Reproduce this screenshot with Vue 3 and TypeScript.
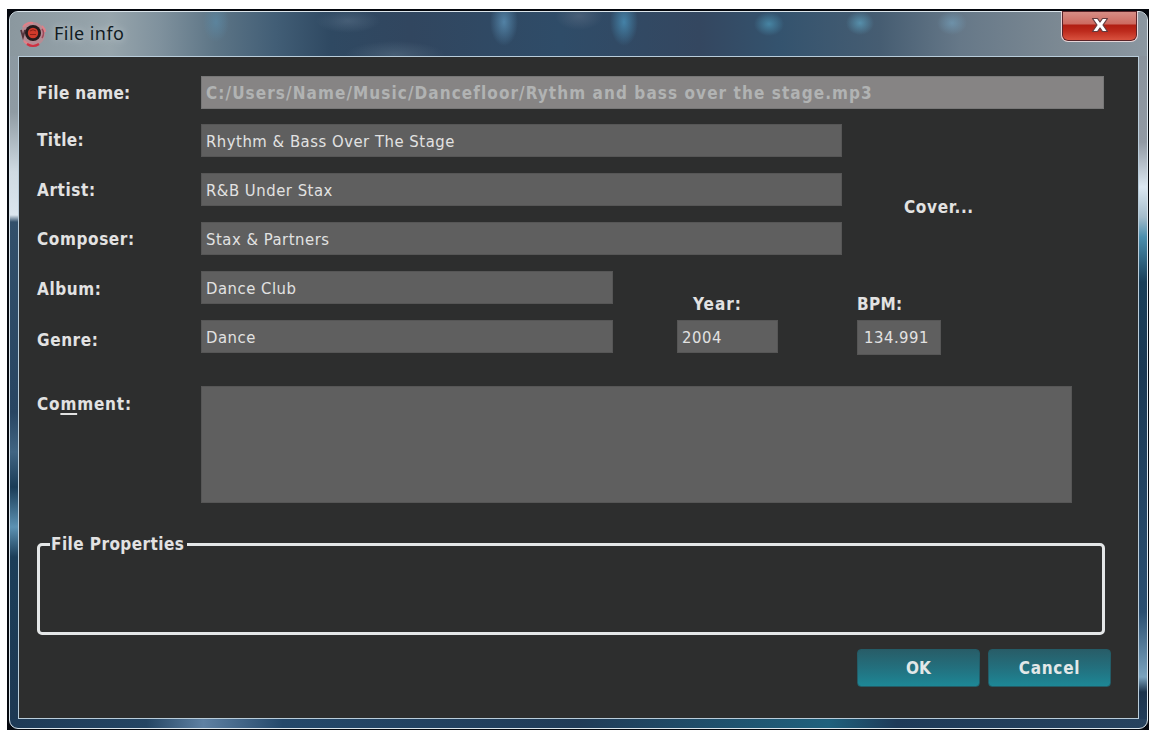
<script setup lang="ts">
interface Row {
  key: string
  label: string
  value: string
}

const mainRows: Row[] = [
  { key: 'title', label: 'Title:', value: 'Rhythm & Bass Over The Stage' },
  { key: 'artist', label: 'Artist:', value: 'R&B Under Stax' },
  { key: 'composer', label: 'Composer:', value: 'Stax & Partners' },
]
const sideRows: Row[] = [
  { key: 'album', label: 'Album:', value: 'Dance Club' },
  { key: 'genre', label: 'Genre:', value: 'Dance' },
]
</script>

<template>
  <div class="page">
    <div class="backdrop">
      <div class="window">
        <header class="titlebar">
          <svg class="app-icon" width="28" height="28" viewBox="0 0 28 28">
            <circle cx="14" cy="14" r="12" fill="#d98088" opacity=".55" />
            <path d="M4 7Q8 2 14 3M5 21q4 4 8 4M23 6q3 3 3 6" fill="none" stroke="#e08088" stroke-width="2" />
            <path d="M8 24q6 4 12 0" fill="none" stroke="#cf3142" stroke-width="2.2" />
            <path d="M2 10l2 7 2-7" fill="none" stroke="#54343c" stroke-width="1.800" />
            <path d="M23 9q3 4 0 9" fill="none" stroke="#a0485a" stroke-width="1.500" />
            <circle cx="14" cy="13" r="8" fill="#251b1d" />
            <circle cx="14" cy="13" r="5.200" fill="#cf3a2b" />
            <path d="M11 11q3-2.500 6 0M11 14.500h6" fill="none" stroke="#8b2018" stroke-width="1" />
          </svg>
          <h1 class="caption">File info</h1>
          <button class="close" aria-label="Close">
            <svg width="18" height="16" viewBox="0 0 18 16">
              <path d="M1.500 1.500H6.500L9 5L11.500 1.500H16.500L12 8L16.500 14.500H11.500L9 11L6.500 14.500H1.500L6 8Z" fill="#fff" stroke="#633b3e" stroke-width="1.200" stroke-linejoin="round" />
            </svg>
          </button>
        </header>

        <main class="body">
          <div class="row filename">
            <label class="label">File name:</label>
            <div class="field path"><span>C:/Users/Name/Music/Dancefloor/Rythm and bass over the stage.mp3</span></div>
          </div>

          <div class="section upper">
            <div class="stack wide">
              <div v-for="r in mainRows" :key="r.key" class="row" :class="r.key">
                <label class="label">{{ r.label }}</label>
                <div class="field"><span>{{ r.value }}</span></div>
              </div>
            </div>
            <span class="cover">Cover...</span>
          </div>

          <div class="section lower">
            <div class="stack narrow">
              <div v-for="r in sideRows" :key="r.key" class="row" :class="r.key">
                <label class="label">{{ r.label }}</label>
                <div class="field"><span>{{ r.value }}</span></div>
              </div>
            </div>
            <div class="mini year">
              <label class="label">Year:</label>
              <div class="field"><span>2004</span></div>
            </div>
            <div class="mini bpm">
              <label class="label">BPM:</label>
              <div class="field"><span>134.991</span></div>
            </div>
          </div>

          <div class="row comment">
            <label class="label">Co<u>m</u>ment:</label>
            <div class="field area"></div>
          </div>

          <fieldset class="props">
            <legend>File Properties</legend>
          </fieldset>

          <footer class="actions">
            <button class="btn ok"><span>OK</span></button>
            <button class="btn cancel"><span>Cancel</span></button>
          </footer>
        </main>
      </div>
    </div>
  </div>
</template>

<style>
html,
body {
  margin: 0;
  background: #fff;
}
</style>

<style scoped>
* {
  box-sizing: border-box;
}
.page {
  width: 1156px;
  height: 735px;
  padding: 9px 7px 5px;
  overflow: hidden;
  background: #fff;
  font-family: 'DejaVu Sans Condensed', 'Noto Sans', sans-serif;
  font-size: 17px;
  color: #e2e2e2;
}
.backdrop {
  width: 1142px;
  height: 721px;
  padding: 2px 1px 1px 2px;
  background: #05080e;
}
.window {
  display: flex;
  flex-direction: column;
  height: 718px;
  padding: 0 8px 9px;
  border: 1.500px solid #dbe5eb;
  border-radius: 9px;
  background:
    linear-gradient(90deg, #1e3a56, #244563 12%, #5f81a3 17%, #24486a 24%, #203b57 50%, #1f617d 72%, #1e3a58 78%, #27435f) bottom / 100% 9px no-repeat,
    linear-gradient(#8a98a1 0, #8f9ba3 100px, #cfdae2 160px, #dbe6ee 203px, #32506b 210px, #284562 400px, #416583 440px, #1a3c57 475px, #5c92b3 515px, #1c3e59 545px, #1d3853 100%) left / 9px 100% no-repeat,
    linear-gradient(#858f99 0, #9199a3 130px, #dce8f2 175px, #a4bccb 205px, #4b8fae 225px, #193f59 270px, #1b3954 360px, #2b4f71 600px, #7ba4bf 665px, #1c334b 680px, #23405f 100%) right / 9px 100% no-repeat,
    #2b4863;
}
.titlebar {
  display: flex;
  flex: none;
  height: 44px;
  margin: 0 -8px;
  padding-left: 9px;
  border-radius: 8px 8px 0 0;
  background:
    radial-gradient(ellipse 13px 20px at 206px 10px, #5b8ba8aa, #5b8ba800),
    radial-gradient(ellipse 32px 12px at 338px 9px, #687e9566, #687e9500),
    radial-gradient(ellipse 14px 24px at 494px 10px, #5b90b5cc, #5b90b500),
    radial-gradient(ellipse 14px 24px at 614px 10px, #4990b8cc, #4990b800),
    radial-gradient(ellipse 15px 12px at 759px 12px, #4b91b1cc, #4b91b100),
    radial-gradient(ellipse 14px 12px at 850px 11px, #5b9cb9cc, #5b9cb900),
    radial-gradient(ellipse 15px 12px at 942px 11px, #739fbaaa, #739fba00),
    radial-gradient(ellipse 24px 14px at 569px 4px, #596b8299, #596b8200),
    radial-gradient(ellipse 50px 14px at 385px 43px, #5b738888, #5b738800),
    linear-gradient(90deg, #8b989f 0, #97a5ac 100px, #7f919d 150px, #5d7586 205px, #425e76 265px, #2f4962 320px, #31465f 400px, #2f4c68 550px, #344760 690px, #34536e 770px, #465d72 870px, #667888 950px, #7c8993 1050px, #8b97a1 100%);
}
.app-icon {
  flex: none;
  margin-top: 8px;
}
.caption {
  margin: 9px 0 0 7px;
  color: #111b22;
  font: 400 18px/24px 'Noto Sans', sans-serif;
  letter-spacing: 0.450px;
  text-shadow: 0 0 7px #cbd5da;
}
.close {
  display: flex;
  align-items: center;
  justify-content: center;
  width: 77px;
  height: 31px;
  margin: -1px 9px 0 auto;
  padding: 0 0 2px;
  border: 1.500px solid #e6d5d8;
  border-top: 0;
  border-radius: 0 0 7px 7px;
  background: linear-gradient(#d79088 0, #cd6a60 13px, #b01e12 14px, #bd2a1c 20px, #dc5643 30px);
  box-shadow: inset 0 0 0 1px #5a2328;
}
.body {
  flex: 1;
  display: flex;
  flex-direction: column;
  min-height: 0;
  border: 1.500px solid #b9cddb;
  padding: 19px 0 0 18px;
  background: #2d2e2e;
}
.row {
  display: flex;
  flex: none;
}
.label {
  width: 164px;
  flex: none;
  font-size: 17px;
  font-weight: 700;
  line-height: 26px;
  letter-spacing: 0.600px;
  white-space: nowrap;
}
.label u {
  text-decoration-thickness: 1.500px;
  text-underline-offset: 3px;
}
.field {
  height: 33px;
  padding-left: 4px;
  border: 1px solid #565656;
  background: #5f5f5f;
  font-size: 16.500px;
  line-height: 34px;
  letter-spacing: 0.520px;
  white-space: nowrap;
}
.path {
  width: 903px;
  border-color: #777;
  background: #868484;
  color: #b1b3b3;
  font-size: 17px;
  font-weight: 700;
  line-height: 33px;
  letter-spacing: 1.070px;
}
.section {
  display: flex;
  flex: none;
}
.stack {
  display: flex;
  flex-direction: column;
  gap: 16px;
}
.upper {
  margin-top: 15px;
}
.wide .field {
  width: 641px;
}
.lower {
  margin-top: 16px;
}
.narrow .field {
  width: 412px;
}
.filename .label {
  padding-top: 4px;
  letter-spacing: 0.330px;
}
.title .label {
  padding-top: 3px;
  letter-spacing: 0.400px;
}
.artist .label {
  padding-top: 4px;
}
.composer .label {
  padding-top: 4px;
}
.album .label {
  padding-top: 5px;
}
.genre .label {
  padding-top: 7px;
}
.cover {
  margin: 70px 0 0 62px;
  font-size: 17px;
  font-weight: 700;
  line-height: 26px;
  letter-spacing: 0.650px;
}
.mini {
  display: flex;
  flex-direction: column;
  padding-top: 20px;
}
.mini .label {
  width: auto;
  margin-bottom: 3px;
}
.year {
  width: 101px;
  margin-left: 64px;
}
.year .label {
  padding-left: 16px;
  letter-spacing: 1px;
}
.bpm {
  width: 84px;
  margin-left: 79px;
}
.bpm .field {
  height: 35px;
  padding-left: 6px;
}
.bpm .label {
  letter-spacing: 0.300px;
}
.comment {
  margin-top: 31px;
}
.comment .label {
  padding-top: 5px;
  letter-spacing: 0.820px;
}
.area {
  width: 871px;
  height: 117px;
}
.props {
  flex: none;
  width: 1068px;
  height: 103px;
  margin: 29px 0 0;
  padding: 0 0 0 10px;
  border: 3px solid #e4e7e8;
  border-radius: 5px;
}
.props legend {
  padding: 0 3px 0 1px;
  font-size: 17px;
  font-weight: 700;
  line-height: 24px;
  letter-spacing: 0.430px;
}
.actions {
  display: flex;
  flex: none;
  gap: 8px;
  margin: 14px 0 0 820px;
}
.btn {
  width: 123px;
  height: 38px;
  padding: 0;
  border: 1px solid #235c67;
  border-radius: 4px;
  background: linear-gradient(#285d68, #23707e 50%, #1d8796);
  color: #e2e8e8;
  font: 700 17px/24px 'DejaVu Sans Condensed', 'Noto Sans', sans-serif;
}
.cancel {
  letter-spacing: 0.700px;
}
</style>
